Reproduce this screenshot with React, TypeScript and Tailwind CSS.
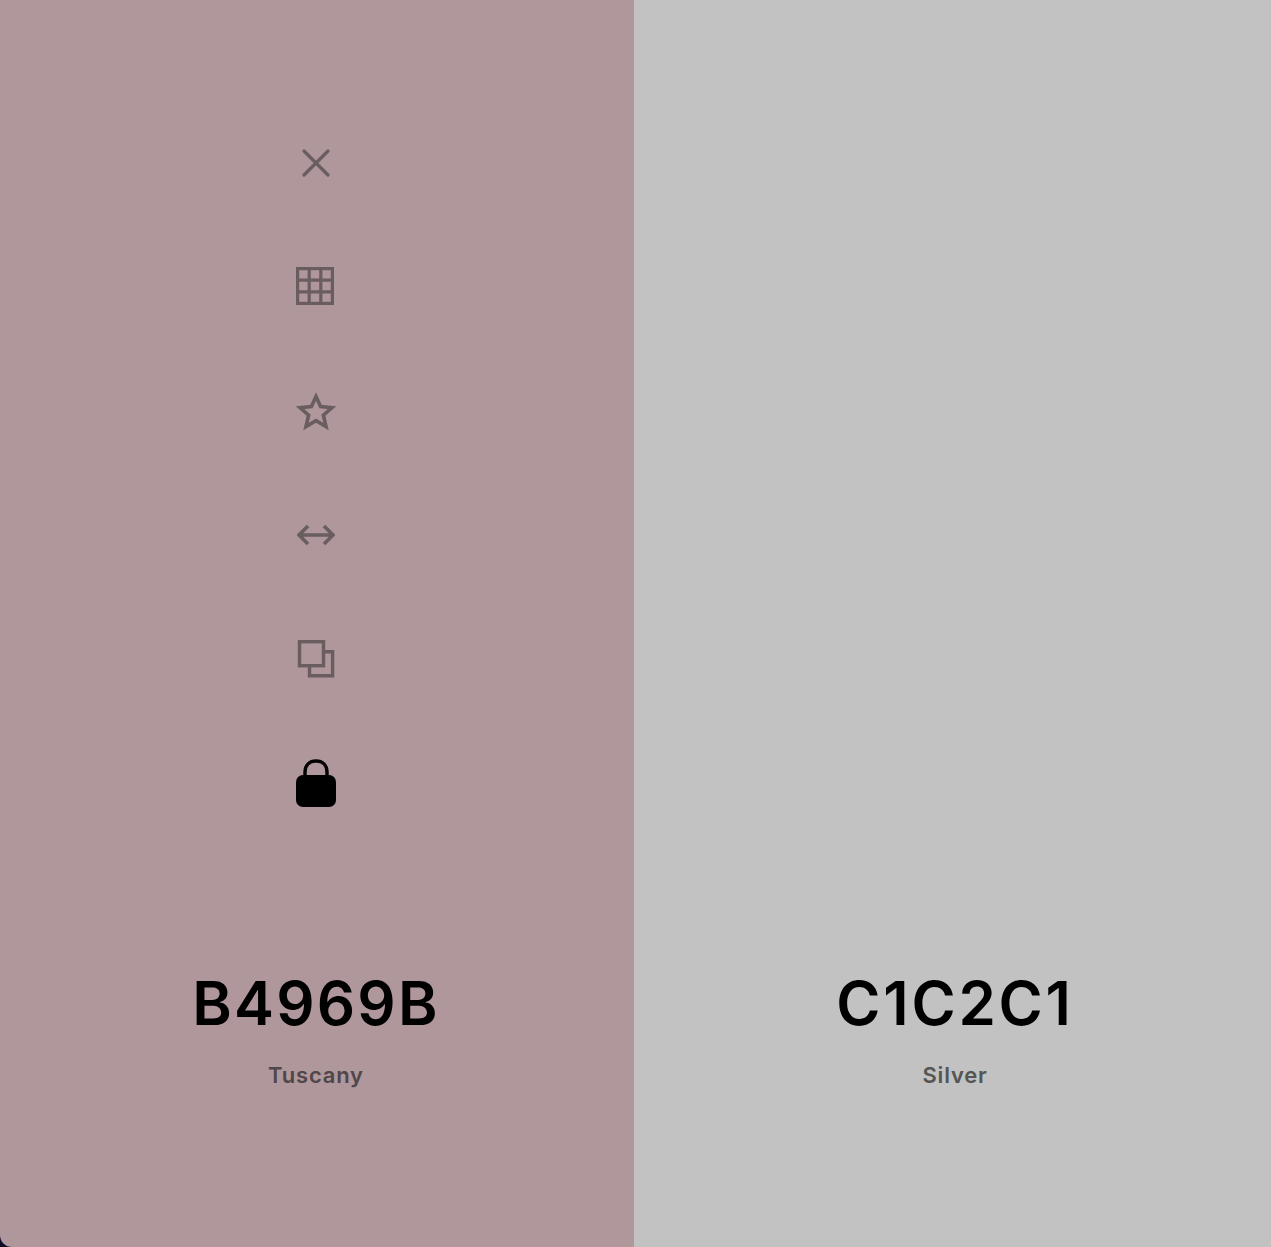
const iconCell = "flex h-[124px] w-full items-center justify-center";

function CloseIcon() {
  return (
    <svg width="30" height="30" viewBox="0 0 30 30" fill="none" stroke="#695d60" strokeWidth="3.2" strokeLinecap="round">
      <path d="M3 3 L27 27 M27 3 L3 27" />
    </svg>
  );
}

function GridIcon() {
  return (
    <svg width="38" height="38" viewBox="1 1 38 38" fill="none" stroke="#695d60" strokeWidth="3.2" className="overflow-visible">
      <rect x="1.6" y="1.6" width="34.8" height="34.8" />
      <path d="M13.2 1.5 V36.5 M24.8 1.5 V36.5 M1.5 13.2 H36.5 M1.5 24.8 H36.5" />
    </svg>
  );
}

function StarIcon() {
  return (
    <svg width="40" height="40" viewBox="0 0 40 40" fill="none" stroke="#695d60" strokeWidth="3.6" strokeLinejoin="miter">
      <path d="M20 5.5 L24.6 15.6 L36 16.6 L27.4 24.2 L30 35.5 L20 29.6 L10 35.5 L12.6 24.2 L4 16.6 L15.4 15.6 Z" />
    </svg>
  );
}

function ArrowsIcon() {
  return (
    <svg width="38" height="22" viewBox="0 0 38 22" fill="none" stroke="#695d60" strokeWidth="3.6">
      <path d="M2 11 H36 M11 2 L2 11 L11 20 M27 2 L36 11 L27 20" />
    </svg>
  );
}

function CopyIcon() {
  return (
    <svg width="38" height="38" viewBox="0 0 38 38" fill="none" stroke="#695d60" strokeWidth="3.4">
      <rect x="2.5" y="1.7" width="24" height="24" />
      <path d="M27 11.7 H35.6 V35.8 H12.5 V26" />
    </svg>
  );
}

function LockIcon() {
  return (
    <svg width="40" height="48" viewBox="0 0 40 48">
      <path d="M9 17 V13 C9 6 13.5 2 20 2 C26.5 2 31 6 31 13 V17" fill="none" stroke="#000" strokeWidth="3.4" />
      <rect x="0" y="16" width="40" height="32" rx="7" fill="#000" />
    </svg>
  );
}

function ColorLabel({ hex, name, hexClass, nameColor }: { hex: string; name: string; hexClass: string; nameColor: string }) {
  return (
    <div className="flex flex-col items-center">
      <div className={`text-[60px] leading-[72px] font-semibold text-black ${hexClass}`}>{hex}</div>
      <div className={`mt-[21px] text-[22px] leading-[30px] font-semibold tracking-[0.8px] ${nameColor}`}>{name}</div>
    </div>
  );
}

export default function App() {
  return (
    <div className="flex h-[1247px] w-full overflow-hidden bg-[#0d0b26] font-['Inter',sans-serif]">
      <div className="flex h-full w-[634px] flex-col items-center rounded-bl-[12px] bg-[#af979b] pt-[101px]">
        <div className="flex w-full flex-col pr-[2px]">
          <div className={iconCell}><CloseIcon /></div>
          <div className={iconCell}><GridIcon /></div>
          <div className={iconCell}><StarIcon /></div>
          <div className={iconCell}><ArrowsIcon /></div>
          <div className={iconCell}><CopyIcon /></div>
          <div className={iconCell}><LockIcon /></div>
        </div>
        <div className="mt-[122px] pr-[2px]">
          <ColorLabel hex="B4969B" name="Tuscany" hexClass="tracking-[2.2px]" nameColor="text-[#514649]" />
        </div>
      </div>
      <div className="flex h-full flex-1 flex-col items-center bg-[#c1c2c1] pt-[967px] pl-[5px]">
        <ColorLabel hex="C1C2C1" name="Silver" hexClass="tracking-[2.8px]" nameColor="text-[#555555]" />
      </div>
    </div>
  );
}
